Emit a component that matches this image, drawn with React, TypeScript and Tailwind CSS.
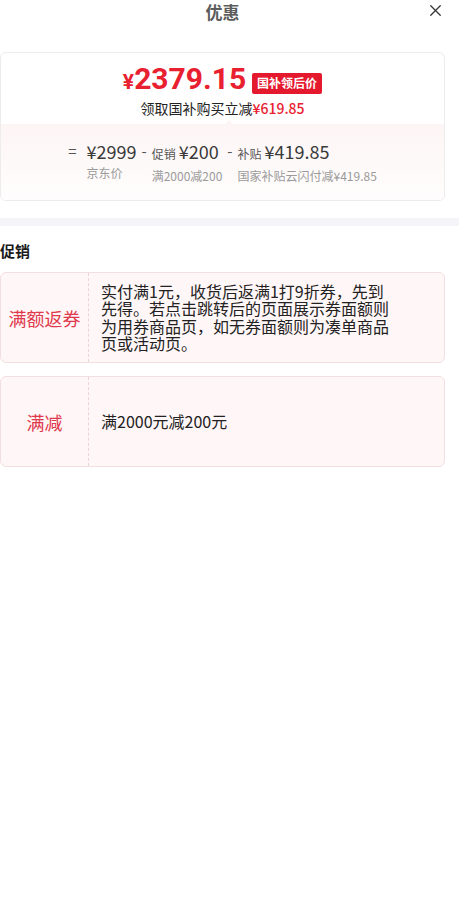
import { X } from "lucide-react";

const cn = "font-['Noto_Sans_CJK_SC','Noto_Sans',sans-serif]";

function Breakdown() {
  const cols = [
    { op: "=", tag: "", value: "¥2999", label: "京东价" },
    { op: "-", tag: "促销", value: "¥200", label: "满2000减200" },
    { op: "-", tag: "补贴", value: "¥419.85", label: "国家补贴云闪付减¥419.85" },
  ];
  return (
    <div className="flex justify-center items-start">
      {cols.map((c, i) => (
        <div key={i} className="flex items-start">
          <span className={`text-[15px] leading-[24px] text-[#555] ${i === 0 ? "mr-[10px]" : "mx-[5px]"}`}>
            {c.op}
          </span>
          <div className="flex flex-col">
            <div className="flex items-baseline text-[#3a3a3a] leading-[24px] whitespace-nowrap">
              {c.tag && <span className="text-[12px] text-[#555] mr-[3px]">{c.tag}</span>}
              <span className="text-[18px]">{c.value}</span>
            </div>
            <span className="mt-[1px] text-[12px] leading-[18px] text-[#9a9a9a] whitespace-nowrap">{c.label}</span>
          </div>
        </div>
      ))}
    </div>
  );
}

function PromoCard({ tag, text }: { tag: string; text: string }) {
  return (
    <div className="flex min-h-[91px] rounded-[6px] border border-[#f3dfe2] bg-[#fff6f7]">
      <div className="w-[88px] shrink-0 flex items-center justify-center border-r border-dashed border-[#ecd3d8]">
        <span className="text-[18px] text-[#e0384c] leading-[24px]">{tag}</span>
      </div>
      <div className="flex items-center pl-[12px] py-[9px]">
        <p className="w-[290px] text-[16px] leading-[17.5px] text-[#222]">{text}</p>
      </div>
    </div>
  );
}

export default function App() {
  return (
    <div className={`w-[473px] -ml-[14px] min-h-[902px] bg-white ${cn}`}>
      <div className="relative h-[23px] flex items-center justify-center">
        <h1 className="text-[17px] font-bold leading-[22px] text-[#5c5c5c]">优惠</h1>
        <button className="absolute right-[14px] top-[1px] text-[#333]">
          <X size={19} strokeWidth={1.6} />
        </button>
      </div>

      <div className="mx-[14px] mt-[29px] rounded-[6px] border border-[#ececec] overflow-hidden">
        <div className="h-[71px] pt-[11px] flex flex-col items-center">
          <div className="flex items-center h-[34px]">
            <span className="font-['Roboto',sans-serif] font-bold text-[#e8202f] leading-[34px]">
              <span className="text-[21px]">¥</span>
              <span className="text-[30px]">2379.15</span>
            </span>
            <span className="ml-[6px] mt-[4px] px-[5px] h-[21px] flex items-center rounded-[2px] bg-[#e5192e] text-white text-[12px] font-bold">
              国补领后价
            </span>
          </div>
          <p className="text-[14px] leading-[20px] text-[#222]">
            领取国补购买立减<span className="text-[#e8202f] font-medium">¥619.85</span>
          </p>
        </div>
        <div className="relative h-[76px] pt-[15px] bg-linear-to-b from-[#fdf5f5] to-[#fffdfd]">
          <span className="absolute left-[224px] -top-[4px] w-0 h-0 border-l-[4px] border-r-[4px] border-b-[4px] border-l-transparent border-r-transparent border-b-[#fdf5f5]" />
          <Breakdown />
        </div>
      </div>

      <div className="mt-[17px] h-[8px] bg-[#f5f5f9]" />

      <div className="px-[14px]">
        <h2 className="mt-[15px] text-[15px] font-bold leading-[20px] text-[#1a1a1a]">促销</h2>
        <div className="mt-[11px] flex flex-col gap-[13px]">
          <PromoCard
            tag="满额返券"
            text="实付满1元，收货后返满1打9折券，先到先得。若点击跳转后的页面展示券面额则为用券商品页，如无券面额则为凑单商品页或活动页。"
          />
          <PromoCard tag="满减" text="满2000元减200元" />
        </div>
      </div>
    </div>
  );
}
